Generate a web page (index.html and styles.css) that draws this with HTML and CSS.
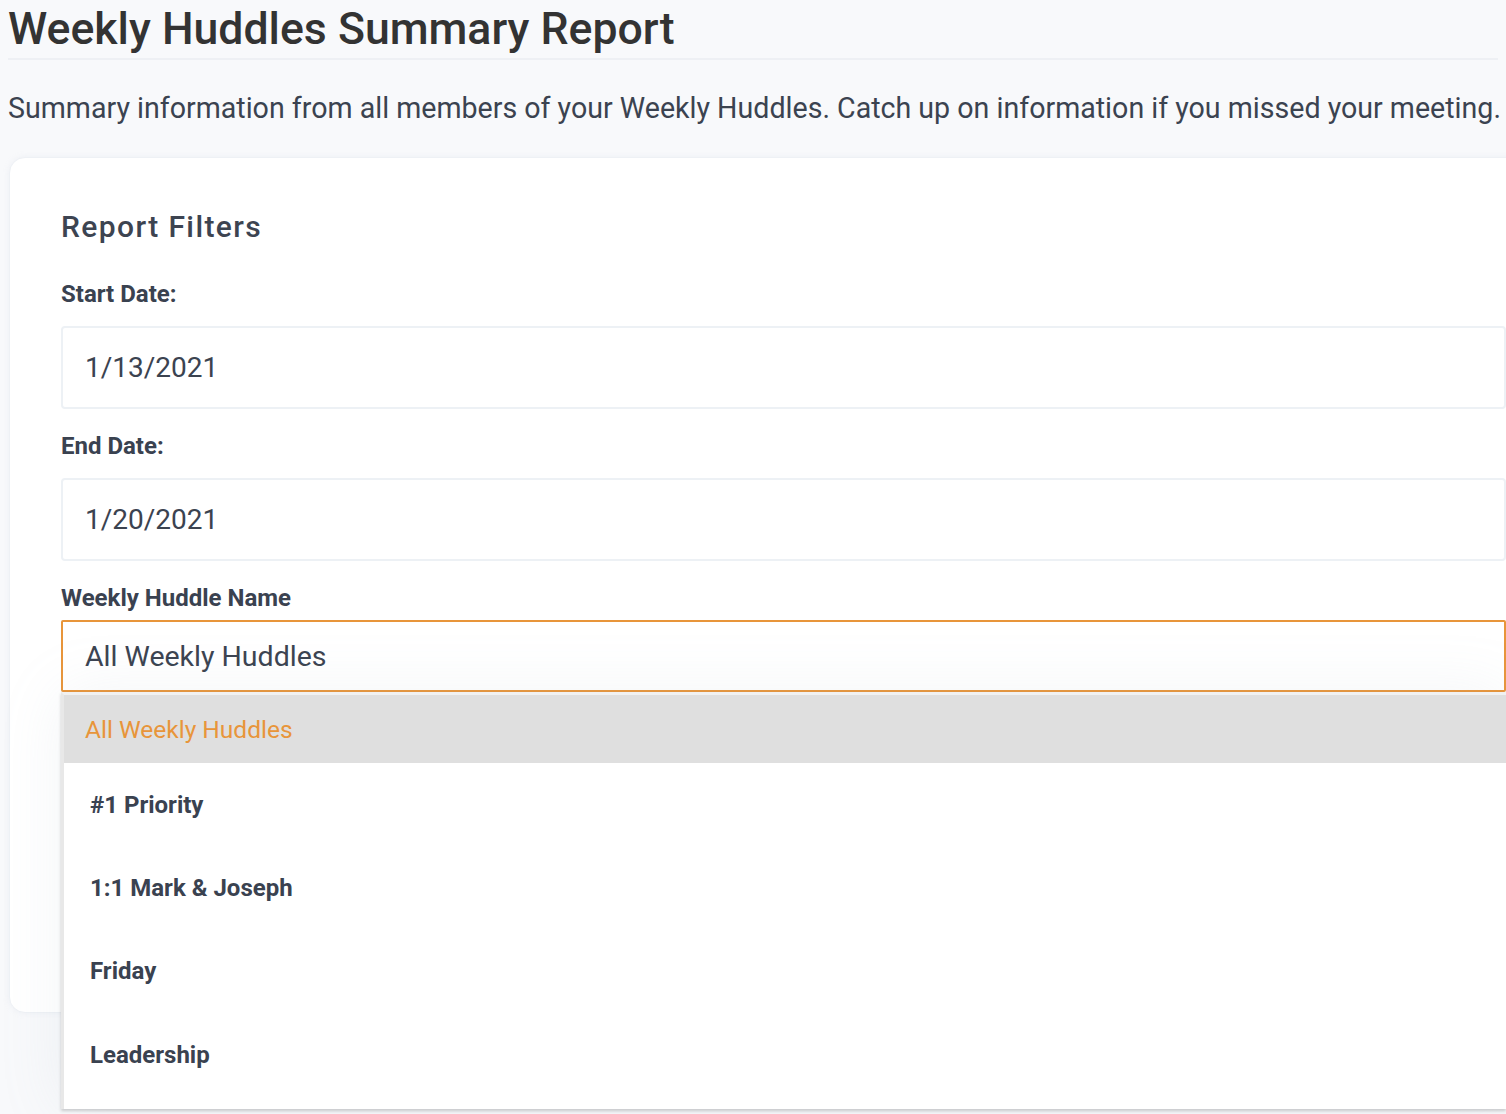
FILE: index.html
```html
<!DOCTYPE html>
<html lang="en">
<head>
  <meta charset="UTF-8">
  <title>Weekly Huddles Summary Report</title>
  <link rel="stylesheet" href="styles.css">
</head>
<body>
  <div class="page">
    <h1 class="page-title">Weekly Huddles Summary Report</h1>
    <hr class="title-rule">
    <p class="page-intro">Summary information from all members of your Weekly Huddles. Catch up on information if you missed your meeting.</p>

    <div class="card">
      <h3 class="card-title">Report Filters</h3>

      <label class="field-label" for="start-date">Start Date:</label>
      <input class="field-input" type="text" id="start-date" value="1/13/2021">

      <label class="field-label" for="end-date">End Date:</label>
      <input class="field-input" type="text" id="end-date" value="1/20/2021">

      <label class="field-label huddle-label">Weekly Huddle Name</label>
      <div class="select-wrap">
        <div class="select-box">All Weekly Huddles</div>

        <!-- open list of huddles -->
        <ul class="select-menu">
          <li class="menu-item active">All Weekly Huddles</li>
          <li class="menu-item">#1 Priority</li>
          <li class="menu-item">1:1 Mark &amp; Joseph</li>
          <li class="menu-item">Friday</li>
          <li class="menu-item">Leadership</li>
        </ul>
      </div>
    </div>
  </div>
</body>
</html>
```

FILE: styles.css
```css
body {
  margin: 0;
  min-height: 100vh;
  background-color: #f8f9fb;
  font-family: Roboto, 'Noto Sans', sans-serif;
  color: #3b4350;
  overflow-x: hidden;
}

.page {
  padding: 6px 8px 0 8px;
}

/* heading + rule */
.page-title {
  margin: 0;
  font-size: 44.6px;
  line-height: 46px;
  font-weight: 500;
  color: #333333;
}

.title-rule {
  border: none;
  border-top: 2px solid #eef0f4;
  margin: 6px 0 0 0;
}

.page-intro {
  margin: 28px 0 0 0;
  font-size: 28.6px;
  line-height: 40px;
  white-space: nowrap;
}

/* filters card, runs past the right edge */
.card {
  position: relative;
  margin: 29px -60px 0 1px;
  height: 856px;
  box-sizing: border-box;
  padding: 51px 51px 0 51px;
  background-color: #ffffff;
  border: 1px solid #eef1f5;
  border-radius: 16px;
  box-shadow: 0 0 6px rgba(180, 190, 205, 0.15);
}

.card-title {
  margin: 0;
  font-size: 30px;
  line-height: 36px;
  font-weight: 500;
  letter-spacing: 1.4px;
  color: #3d4451;
}

.field-label {
  display: block;
  margin-top: 34px;
  font-size: 24px;
  line-height: 30px;
  font-weight: 700;
  color: #3a4250;
}

.field-input + .field-label {
  margin-top: 22px;
}

.field-input {
  display: block;
  width: 100%;
  height: 83px;
  box-sizing: border-box;
  margin: 17px 0 0 0;
  padding: 0 22px;
  font-family: inherit;
  font-size: 28px;
  color: #3b4350;
  border: 2px solid #edf1f5;
  border-radius: 4px;
  outline: none;
}

.huddle-label {
  margin-top: 22px;
}

/* select with its menu open */
.select-wrap {
  position: relative;
  margin-top: 7px;
}

.select-box {
  height: 72px;
  box-sizing: border-box;
  padding: 0 22px;
  display: flex;
  align-items: center;
  font-size: 28.5px;
  border: 2px solid #e8953a;
  border-radius: 2px;
}

.select-menu {
  position: absolute;
  top: 72px;
  left: 0;
  right: 0;
  margin: 0;
  padding: 0 0 13px 0;
  list-style-type: none;
  background-color: #ffffff;
  border-top: 3px solid #f1f1f1;
  border-left: 3px solid #e8e8e8;
  box-shadow: 0 2px 3px rgba(0, 0, 0, 0.18), 0 0 60px rgba(160, 170, 190, 0.12);
  z-index: 2;
}

.menu-item {
  height: 83.3px;
  display: flex;
  align-items: center;
  padding-left: 26px;
  font-size: 24px;
  font-weight: 700;
  color: #3a4250;
}

.menu-item.active {
  height: 68px;
  padding-left: 21px;
  background-color: #dfdfdf;
  font-size: 24.5px;
  font-weight: 400;
  color: #e8953a;
}
```
